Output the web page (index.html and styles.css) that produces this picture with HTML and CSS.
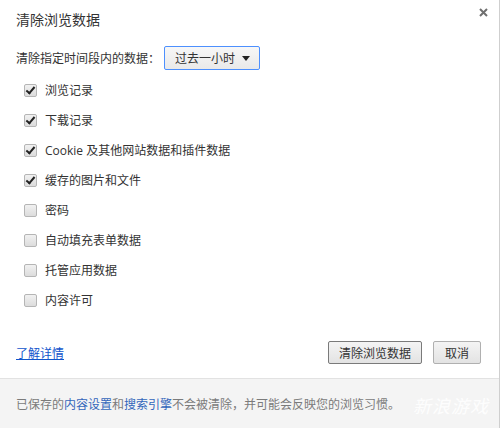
FILE: index.html
```html
<!DOCTYPE html>
<html lang="zh-CN">
<head>
<meta charset="utf-8">
<title>清除浏览数据</title>
<link rel="stylesheet" href="styles.css">
</head>
<body>
<div class="dialog">
  <div class="main">
    <div class="title">清除浏览数据</div>
    <button class="close" aria-label="关闭">
      <svg width="9" height="9" viewBox="0 0 9 9"><path d="M1 1L8 8M8 1L1 8" stroke="#6f6f6f" stroke-width="2"/></svg>
    </button>
    <div class="period">
      <span>清除指定时间段内的数据：</span>
      <div class="select"><span>过去一小时</span><span class="arrow"></span></div>
    </div>
    <ul class="options">
      <li><span class="cb checked"></span><span>浏览记录</span></li>
      <li><span class="cb checked"></span><span>下载记录</span></li>
      <li><span class="cb checked"></span><span>Cookie 及其他网站数据和插件数据</span></li>
      <li><span class="cb checked"></span><span>缓存的图片和文件</span></li>
      <li><span class="cb"></span><span>密码</span></li>
      <li><span class="cb"></span><span>自动填充表单数据</span></li>
      <li><span class="cb"></span><span>托管应用数据</span></li>
      <li><span class="cb"></span><span>内容许可</span></li>
    </ul>
    <div class="actions">
      <a class="learn" href="#">了解详情</a>
      <div class="buttons">
        <button class="btn primary">清除浏览数据</button>
        <button class="btn">取消</button>
      </div>
    </div>
  </div>
  <div class="footer">
    <span>已保存的<a href="#">内容设置</a>和<a href="#">搜索引擎</a>不会被清除，并可能会反映您的浏览习惯。</span>
    <span class="watermark">新浪游戏</span>
  </div>
</div>
</body>
</html>
```

FILE: styles.css
```css
html, body {
  margin: 0;
  padding: 0;
  background: #fff;
}
body {
  width: 500px;
  height: 428px;
  overflow: hidden;
  font-family: "Open Sans", "Noto Sans CJK SC", sans-serif;
  font-size: 12px;
  color: #333;
}
.dialog {
  width: 499px;
  height: 428px;
  border-right: 1px solid #cfcfcf;
  display: flex;
  flex-direction: column;
  position: relative;
}
.main {
  flex: 1;
  padding: 10px 16px 0;
}
.title {
  font-size: 14px;
  line-height: 20px;
  color: #333;
}
.close {
  position: absolute;
  top: 7px;
  right: 10px;
  width: 11px;
  height: 11px;
  padding: 0;
  border: 0;
  background: none;
  display: flex;
  align-items: center;
  justify-content: center;
}
.period {
  margin-top: 16px;
  display: flex;
  align-items: center;
  gap: 4px;
  height: 24px;
}
.select {
  box-sizing: border-box;
  width: 96px;
  height: 24px;
  border: 1px solid #4d90fe;
  border-radius: 2px;
  background: linear-gradient(#f7f7f7, #e9e9e9);
  display: flex;
  align-items: center;
  justify-content: space-between;
  padding: 0 9px 0 10px;
  color: #333;
}
.arrow {
  width: 0;
  height: 0;
  border-left: 4px solid transparent;
  border-right: 4px solid transparent;
  border-top: 5px solid #222;
}
.options {
  list-style: none;
  margin: 5px 0 0;
  padding: 0 0 0 8px;
}
.options li {
  height: 30px;
  display: flex;
  align-items: center;
  gap: 8px;
  color: #333;
}
.cb {
  box-sizing: border-box;
  width: 13px;
  height: 13px;
  border: 1px solid #b5b5b5;
  border-radius: 2px;
  background: linear-gradient(#f1f1f1, #dcdcdc);
  position: relative;
  flex: none;
}
.cb.checked::after {
  content: "";
  position: absolute;
  left: 3px;
  top: 0px;
  width: 3px;
  height: 7px;
  border-right: 2px solid #222;
  border-bottom: 2px solid #222;
  transform: rotate(40deg);
}
.actions {
  margin-top: 26px;
  display: flex;
  align-items: center;
  justify-content: space-between;
  padding-right: 2px;
}
.learn {
  color: #1155cc;
  text-decoration: underline;
}
.buttons {
  display: flex;
  gap: 11px;
}
.btn {
  box-sizing: border-box;
  height: 23px;
  padding: 0;
  white-space: nowrap;
  font-family: "Open Sans", "Noto Sans CJK SC", sans-serif;
  font-size: 12px;
  color: #333;
  border: 1px solid #b0b0b0;
  border-radius: 2px;
  background: linear-gradient(#f4f4f4, #e3e3e3);
}
.btn.primary {
  border-color: #7a7a7a;
  width: 94px;
}
.btn:not(.primary) {
  width: 48px;
}
.footer {
  height: 50px;
  box-sizing: border-box;
  border-top: 1px solid #e2e2e2;
  background: #f4f4f4;
  padding: 0 16px;
  display: flex;
  align-items: center;
  color: #7b7b7b;
  position: relative;
}
.footer a {
  color: #3366bb;
  text-decoration: none;
}
.watermark {
  position: absolute;
  right: 10px;
  top: 13px;
  font-size: 18px;
  color: rgba(255, 255, 255, 0.9);
  font-style: italic;
  letter-spacing: 1px;
}
```
